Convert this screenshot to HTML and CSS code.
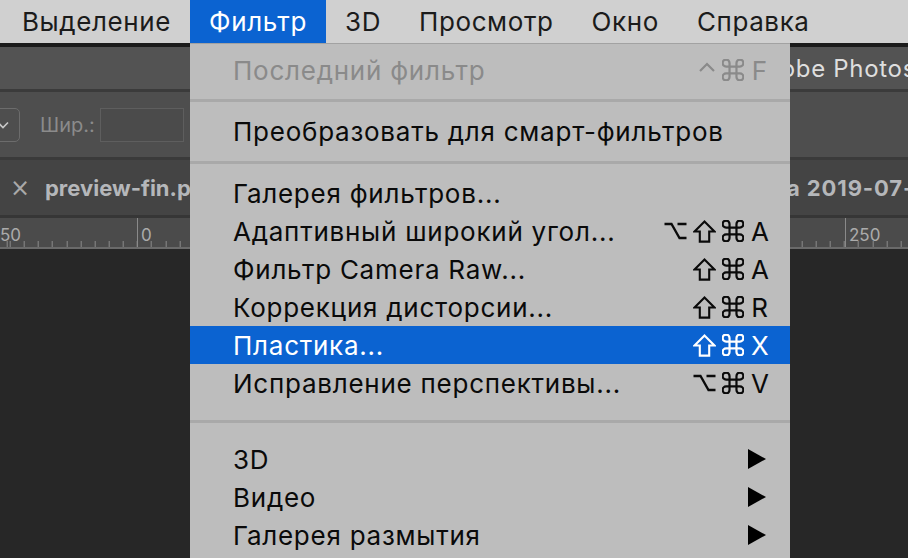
FILE: index.html
```html
<!DOCTYPE html>
<html lang="ru">
<head>
<meta charset="utf-8">
<title>Фильтр</title>
<link rel="stylesheet" href="styles.css">
</head>
<body>
<div class="screen">
  <div class="menubar">
    <span class="mb-item">Выделение</span>
    <span class="mb-item active">Фильтр</span>
    <span class="mb-item">3D</span>
    <span class="mb-item">Просмотр</span>
    <span class="mb-item">Окно</span>
    <span class="mb-item">Справка</span>
  </div>

  <div class="app">
    <div class="titlebar"><span class="title-text">Adobe Photoshop CC 2019</span></div>
    <div class="optbar">
      <div class="dropbox">
        <svg class="chev" width="12" height="8" viewBox="0 0 12 8"><path d="M1 1.5 L6 6.5 L11 1.5" fill="none" stroke="#c8c8c8" stroke-width="1.6"/></svg>
      </div>
      <span class="opt-label">Шир.:</span>
      <div class="opt-input"></div>
    </div>
    <div class="tabbar">
      <div class="tab tab-first"><span class="tab-x">×</span><span class="tab-name">preview-fin.psd @ 100% (RGB/8)</span></div>
      <div class="tab"><span class="tab-name tab-name2">а 2019-07-18 в 12.45.31.png</span></div>
    </div>
    <div class="ruler">
      <span class="major" style="left:137px"></span>
      <span class="rlabel" style="left:0px">50</span>
      <span class="rlabel" style="left:141px">0</span>
      <span class="major" style="left:845px"></span>
      <span class="rlabel" style="left:849px">250</span>
    </div>
    <div class="canvas"></div>
  </div>

  <div class="dropdown">
    <div class="mi disabled"><span class="label">Последний фильтр</span>
      <span class="sc">
        <svg class="ic ic-ctrl" width="18" height="20" viewBox="0 0 18 20"><path d="M2 11 L9 4 L16 11" fill="none" stroke="currentColor" stroke-width="2.2"/></svg>
        <svg class="ic" width="22" height="22" viewBox="2.5 2.5 19 19"><path d="M9 9V6A3 3 0 1 0 6 9H9ZM15 9V6A3 3 0 1 1 18 9H15ZM15 15V18A3 3 0 1 0 18 15H15ZM9 15V18A3 3 0 1 1 6 15H9ZM9 9H15V15H9Z" fill="none" stroke="currentColor" stroke-width="1.9"/></svg>
        <span class="k">F</span>
      </span>
    </div>
    <div class="sep"></div>
    <div class="mi"><span class="label">Преобразовать для смарт-фильтров</span></div>
    <div class="sep sep2"></div>
    <div class="mi"><span class="label">Галерея фильтров...</span></div>
    <div class="mi"><span class="label">Адаптивный широкий угол...</span>
      <span class="sc">
        <svg class="ic" width="23" height="20" viewBox="0 0 23 20"><path d="M0.5 3H7.5L15.5 17H22.5M13.5 3H22.5" fill="none" stroke="currentColor" stroke-width="2.3"/></svg>
        <svg class="ic" width="23" height="23" viewBox="0 0 23 23"><path d="M11.5 1.6L21.4 11.5H16.2V21.6H6.8V11.5H1.6Z" fill="none" stroke="currentColor" stroke-width="2.1" stroke-linejoin="miter"/></svg>
        <svg class="ic" width="22" height="22" viewBox="2.5 2.5 19 19"><path d="M9 9V6A3 3 0 1 0 6 9H9ZM15 9V6A3 3 0 1 1 18 9H15ZM15 15V18A3 3 0 1 0 18 15H15ZM9 15V18A3 3 0 1 1 6 15H9ZM9 9H15V15H9Z" fill="none" stroke="currentColor" stroke-width="1.9"/></svg>
        <span class="k">A</span>
      </span>
    </div>
    <div class="mi"><span class="label">Фильтр Camera Raw...</span>
      <span class="sc">
        <svg class="ic" width="23" height="23" viewBox="0 0 23 23"><path d="M11.5 1.6L21.4 11.5H16.2V21.6H6.8V11.5H1.6Z" fill="none" stroke="currentColor" stroke-width="2.1" stroke-linejoin="miter"/></svg>
        <svg class="ic" width="22" height="22" viewBox="2.5 2.5 19 19"><path d="M9 9V6A3 3 0 1 0 6 9H9ZM15 9V6A3 3 0 1 1 18 9H15ZM15 15V18A3 3 0 1 0 18 15H15ZM9 15V18A3 3 0 1 1 6 15H9ZM9 9H15V15H9Z" fill="none" stroke="currentColor" stroke-width="1.9"/></svg>
        <span class="k">A</span>
      </span>
    </div>
    <div class="mi"><span class="label">Коррекция дисторсии...</span>
      <span class="sc">
        <svg class="ic" width="23" height="23" viewBox="0 0 23 23"><path d="M11.5 1.6L21.4 11.5H16.2V21.6H6.8V11.5H1.6Z" fill="none" stroke="currentColor" stroke-width="2.1" stroke-linejoin="miter"/></svg>
        <svg class="ic" width="22" height="22" viewBox="2.5 2.5 19 19"><path d="M9 9V6A3 3 0 1 0 6 9H9ZM15 9V6A3 3 0 1 1 18 9H15ZM15 15V18A3 3 0 1 0 18 15H15ZM9 15V18A3 3 0 1 1 6 15H9ZM9 9H15V15H9Z" fill="none" stroke="currentColor" stroke-width="1.9"/></svg>
        <span class="k">R</span>
      </span>
    </div>
    <div class="mi selected"><span class="label">Пластика...</span>
      <span class="sc">
        <svg class="ic" width="23" height="23" viewBox="0 0 23 23"><path d="M11.5 1.6L21.4 11.5H16.2V21.6H6.8V11.5H1.6Z" fill="none" stroke="currentColor" stroke-width="2.1" stroke-linejoin="miter"/></svg>
        <svg class="ic" width="22" height="22" viewBox="2.5 2.5 19 19"><path d="M9 9V6A3 3 0 1 0 6 9H9ZM15 9V6A3 3 0 1 1 18 9H15ZM15 15V18A3 3 0 1 0 18 15H15ZM9 15V18A3 3 0 1 1 6 15H9ZM9 9H15V15H9Z" fill="none" stroke="currentColor" stroke-width="1.9"/></svg>
        <span class="k">X</span>
      </span>
    </div>
    <div class="mi"><span class="label">Исправление перспективы...</span>
      <span class="sc">
        <svg class="ic" width="23" height="20" viewBox="0 0 23 20"><path d="M0.5 3H7.5L15.5 17H22.5M13.5 3H22.5" fill="none" stroke="currentColor" stroke-width="2.3"/></svg>
        <svg class="ic" width="22" height="22" viewBox="2.5 2.5 19 19"><path d="M9 9V6A3 3 0 1 0 6 9H9ZM15 9V6A3 3 0 1 1 18 9H15ZM15 15V18A3 3 0 1 0 18 15H15ZM9 15V18A3 3 0 1 1 6 15H9ZM9 9H15V15H9Z" fill="none" stroke="currentColor" stroke-width="1.9"/></svg>
        <span class="k">V</span>
      </span>
    </div>
    <div class="sep sep3"></div>
    <div class="mi"><span class="label">3D</span><span class="arrow"></span></div>
    <div class="mi"><span class="label">Видео</span><span class="arrow"></span></div>
    <div class="mi"><span class="label">Галерея размытия</span><span class="arrow"></span></div>
  </div>
</div>
</body>
</html>
```

FILE: styles.css
```css
html, body {
  margin: 0;
  padding: 0;
}
body {
  width: 908px;
  height: 558px;
  overflow: hidden;
  background: #272727;
  font-family: Inter, "Liberation Sans", sans-serif;
}
.screen {
  position: relative;
  width: 908px;
  height: 558px;
  overflow: hidden;
}

/* macOS menu bar */
.menubar {
  height: 43px;
  background: #d0d0d0;
  display: flex;
  align-items: center;
  padding-left: 3px;
}
.mb-item {
  height: 43px;
  display: flex;
  align-items: center;
  padding: 0 19px;
  font-size: 26px;
  letter-spacing: 0.6px;
  color: #1b1b1b;
  white-space: nowrap;
}
.mb-item.active {
  background: #0b63d1;
  color: #ffffff;
}

/* Photoshop chrome */
.app {
  border-top: 4px solid #1b1b1b;
}
.titlebar {
  height: 42px;
  background: #535353;
  border-bottom: 3px solid #3b3b3b;
  display: flex;
  align-items: center;
  padding-left: 748px;
  white-space: nowrap;
  overflow: hidden;
}
.title-text {
  font-size: 24px;
  letter-spacing: 0.7px;
  color: #dedede;
}
.optbar {
  height: 65px;
  background: #4e4e4e;
  border-bottom: 3px solid #3a3a3a;
  display: flex;
  align-items: center;
}
.dropbox {
  width: 32px;
  height: 34px;
  margin-left: -12px;
  border: 1px solid #6c6c6c;
  border-radius: 5px;
  display: flex;
  align-items: center;
  justify-content: flex-end;
  padding-right: 8px;
  box-sizing: border-box;
}
.chev {
  display: block;
  margin-right: 2px;
}
.opt-label {
  margin-left: 20px;
  font-size: 20px;
  color: #8b8b8b;
}
.opt-input {
  width: 82px;
  height: 32px;
  margin-left: 5px;
  border: 1px solid #5e5e5e;
  background: #4b4b4b;
}
.tabbar {
  height: 55px;
  background: #444444;
  border-bottom: 3px solid #363636;
  display: flex;
  align-items: center;
  white-space: nowrap;
  overflow: hidden;
}
.tab {
  display: flex;
  align-items: center;
  flex: 0 0 auto;
  overflow: hidden;
}
.tab-first {
  flex: 0 0 787px;
  padding-left: 10px;
  box-sizing: border-box;
}
.tab-x {
  font-size: 24px;
  color: #a9a9a9;
  width: 35px;
  font-family: "DejaVu Sans", sans-serif;
}
.tab-name {
  font-size: 22px;
  font-weight: 700;
  color: #b5b7ba;
}
.tab-name2 {
  letter-spacing: 0.9px;
}
.ruler {
  position: relative;
  height: 29px;
  background-color: #4b4b4b;
  border-bottom: 2px solid #6a6a6a;
  background-image: repeating-linear-gradient(to right, #8a8a8a 0 1px, transparent 1px 14.14px);
  background-position: 9.7px 100%;
  background-size: 100% 6px;
  background-repeat: repeat-x;
}
.major {
  position: absolute;
  top: 0;
  bottom: 0;
  width: 1px;
  background: #8a8a8a;
}
.rlabel {
  position: absolute;
  top: 9px;
  font-size: 17px;
  line-height: 17px;
  color: #ababab;
}
.canvas {
  height: 320px;
  background: #272727;
}

/* Dropdown menu */
.dropdown {
  position: absolute;
  left: 190px;
  top: 43px;
  width: 600px;
  height: 520px;
  background: #bdbdbd;
  border-top: 1px solid #a2a2a2;
  padding-top: 7px;
  box-sizing: border-box;
}
.mi {
  height: 38px;
  display: flex;
  align-items: center;
  padding: 0 22px 0 43px;
  font-size: 26px;
  letter-spacing: 0.75px;
  color: #0a0a0a;
  white-space: nowrap;
}
.mi .label {
  flex: 1;
}
.mi.disabled {
  color: #8a8a8a;
}
.mi.selected {
  background: #0b63d1;
  color: #ffffff;
}
.sc {
  display: flex;
  align-items: center;
  gap: 6px;
}
.ic {
  display: block;
  flex: 0 0 auto;
}
.sc .k {
  width: 17px;
  margin-left: 1px;
  text-align: center;
  letter-spacing: 0;
}
.sep {
  height: 23px;
  display: flex;
  flex-direction: column;
  justify-content: center;
}
.sep::after {
  content: "";
  height: 3px;
  background: #a9a9a9;
}
.sep2 {
  height: 24px;
}
.sep3 {
  height: 38px;
}
.arrow {
  width: 0;
  height: 0;
  border-left: 18px solid #000;
  border-top: 10px solid transparent;
  border-bottom: 10px solid transparent;
  margin-right: 2px;
}
```
